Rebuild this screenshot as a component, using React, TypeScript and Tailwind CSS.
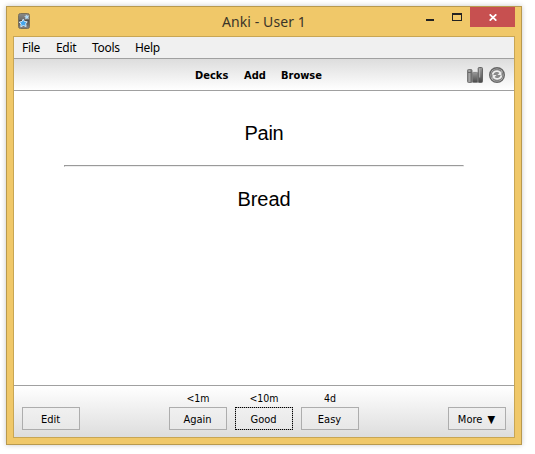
import type { ReactNode } from 'react';

function AnkiIcon() {
  return (
    <svg className="block h-4 w-3" viewBox="0 0 12 16">
      <defs>
        <linearGradient id="deck" x1="0" y1="0" x2="0" y2="1">
          <stop offset="0" stopColor="#8a8a88" />
          <stop offset="0.4" stopColor="#6e6e6e" />
          <stop offset="0.45" stopColor="#4c4c4c" />
          <stop offset="1" stopColor="#858585" />
        </linearGradient>
      </defs>
      <rect x="0.5" y="0.5" width="11" height="15" rx="2" fill="url(#deck)" stroke="#7a7058" />
      <path d="M5.2 6.2 6.5 8.5 9.2 8.8 7.7 10.8 8.1 13.5 5.4 12.5 2.8 13.7 3 11.1 1.3 9.1 4 8.5Z" fill="#45a6ec" stroke="#e2f3ff" strokeWidth="0.9" />
      <path d="m8.2 1.8.9 1.1 1.6-.2-.7 1.5.5 1.3-1.5-.3-1.4.8.1-1.6-1-1 1.4-.2Z" fill="#a9d9f7" stroke="#d8efff" strokeWidth="0.4" />
    </svg>
  );
}

function StatsIcon() {
  return (
    <svg className="block h-4 w-4" viewBox="0 0 16 16">
      <defs>
        <linearGradient id="bar" x1="0" x2="1">
          <stop offset="0" stopColor="#777" />
          <stop offset="0.4" stopColor="#aaa" />
          <stop offset="1" stopColor="#5c5c5c" />
        </linearGradient>
        <linearGradient id="darkBar" x1="0" y1="0" x2="0" y2="1">
          <stop offset="0" stopColor="#999" />
          <stop offset="1" stopColor="#484848" />
        </linearGradient>
      </defs>
      <rect x="0.5" y="2.5" width="4.5" height="13" rx="1" fill="url(#bar)" stroke="#777" />
      <path d="M1 5.5h3.5" stroke="#666" />
      <rect x="5.4" y="5.4" width="5.4" height="10.2" rx="1" fill="url(#darkBar)" stroke="#777" strokeWidth="0.8" />
      <rect x="11.2" y="0.5" width="4.3" height="15" rx="1" fill="url(#darkBar)" stroke="#666" />
      <path d="M12.7 1.5v9" stroke="#bbb" strokeWidth="0.9" />
    </svg>
  );
}

function SyncIcon() {
  return (
    <svg className="block h-4 w-4" viewBox="0 0 16 16">
      <circle cx="8" cy="8" r="7.3" fill="#c4c4c4" stroke="#666" strokeWidth="1.4" />
      <circle cx="8" cy="8" r="5.8" fill="#8b8b8b" stroke="#777" strokeWidth="0.8" />
      <path d="M3.6 7.7C4 4 9 3 11.2 5.6M12.4 8.3C12 12 7 13 4.8 10.4" fill="none" stroke="#efefef" strokeWidth="1.7" />
      <path d="M12.4 4v4H8.4ZM3.6 12V8h4Z" fill="#efefef" />
    </svg>
  );
}

function TitleBar() {
  return (
    <header className="flex h-[29px] shrink-0 items-start">
      <div className="w-[209px] pl-[5px] pt-1.5">
        <AnkiIcon />
      </div>
      <h1 className="w-[199px] whitespace-nowrap pl-[3px] font-['Noto_Sans',sans-serif] text-[14px] leading-[29px] tracking-[0.1px] text-[#3b3428]">Anki - User 1</h1>
      <div className="flex">
        <svg className="block h-5 w-[55px]" viewBox="0 0 55 20" shapeRendering="crispEdges">
          <path d="M11 12h8v2h-8z" fill="#222" />
          <path fillRule="evenodd" d="M37 6h10v8H37zM38 8v5h8V8z" fill="#222" />
        </svg>
        <div className="flex h-5 w-[45px] items-center justify-center bg-[#c75050]">
          <svg className="block h-[7px] w-2" viewBox="0 0 8 7">
            <path d="m.7.3 6.6 6.4M7.3.3.7 6.7" stroke="#fff" strokeWidth="1.7" />
          </svg>
        </div>
      </div>
    </header>
  );
}

function Button({ children, focused = false }: { children: ReactNode; focused?: boolean }) {
  return (
    <button
      className={`h-[23px] w-[58px] whitespace-nowrap border border-[#adadad] bg-gradient-to-b from-[#f0f0f0] to-[#e8e8e8] pr-px pt-px text-[11px] leading-[21px] ${
        focused ? 'outline-1 -outline-offset-1 outline-dotted outline-black' : ''
      }`}
    >
      {children}
    </button>
  );
}

function Answer({ due, label, focused }: { due: string; label: string; focused?: boolean }) {
  return (
    <div className="flex w-[58px] flex-col items-center">
      <span className="h-4 text-[10.5px] leading-[15px]">{due}</span>
      <Button focused={focused}>{label}</Button>
    </div>
  );
}

export default function App() {
  return (
    <div className="h-[454px] w-[535px] overflow-hidden bg-white pl-1.5 pt-1.5 font-['DejaVu_Sans_Condensed','DejaVu_Sans',sans-serif] text-black">
      <main className="flex h-[439px] w-[516px] flex-col border border-[#b8994e] bg-[#f0c869] px-1.5 pb-1.5 shadow-[0_0_5px_rgba(0,0,0,0.22)]">
        <TitleBar />
        <div className="flex min-h-0 flex-1 flex-col border border-[#c8a654] bg-white">
          <nav className="flex h-[22px] shrink-0 border-b border-[#a0a0a0] bg-[#f0f0f0] pl-2 font-['Noto_Sans',sans-serif] text-[12px] leading-[21px] tracking-[-0.3px]">
            <span className="w-[34px]">File</span>
            <span className="w-9">Edit</span>
            <span className="w-[43px]">Tools</span>
            <span>Help</span>
          </nav>
          <div className="flex h-8 shrink-0 border-b border-[#a0a0a0] bg-gradient-to-b from-[#dddddd] to-white pl-[181px] pr-[9px]">
            <nav className="flex flex-1 pt-px text-[11px] font-bold leading-[32px]">
              <span className="w-[49px]">Decks</span>
              <span className="w-[37px]">Add</span>
              <span>Browse</span>
            </nav>
            <div className="flex items-center gap-1.5">
              <StatsIcon />
              <SyncIcon />
            </div>
          </div>
          <section className="flex flex-1 flex-col items-center pt-[30px] font-['Liberation_Sans',Arial,sans-serif] text-[20px] leading-6">
            <p className="tracking-[-0.3px]">Pain</p>
            <hr className="my-5 h-0.5 w-[400px] border border-[#eeeeee] border-l-[#9a9a9a] border-t-[#9a9a9a]" />
            <p className="tracking-[-0.1px]">Bread</p>
          </section>
          <footer className="flex h-[52px] shrink-0 items-end justify-between border-t border-[#a0a0a0] bg-gradient-to-b from-white to-[#dddddd] px-2 pb-[7px]">
            <Button>Edit</Button>
            <div className="flex gap-2">
              <Answer due="<1m" label="Again" />
              <Answer due="<10m" label="Good" focused />
              <Answer due="4d" label="Easy" />
            </div>
            <Button>
              More <span className="ml-0.5">▼</span>
            </Button>
          </footer>
        </div>
      </main>
    </div>
  );
}
